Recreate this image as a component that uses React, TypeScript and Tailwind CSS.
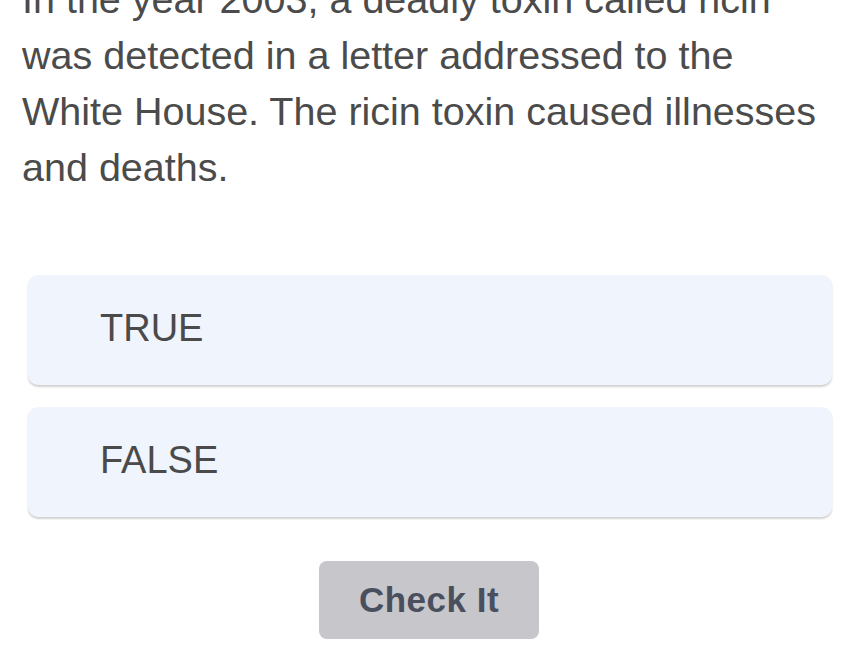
import React, { useState } from 'react';

const options = ['TRUE', 'FALSE'];

const questionLines = [
  'In the year 2003, a deadly toxin called ricin',
  'was detected in a letter addressed to the',
  'White House. The ricin toxin caused illnesses',
  'and deaths.',
];

export default function App() {
  const [selected, setSelected] = useState<string | null>(null);

  return (
    <div className="min-h-[669px] bg-white overflow-hidden font-['Liberation_Sans',Arial,sans-serif]">
      {/* Question text */}
      <p className="-mt-[29px] pl-[22px] text-[39.5px] leading-[56px] text-[#4b4b4b] whitespace-nowrap">
        {questionLines.map((line) => (
          <span key={line} className="block">
            {line}
          </span>
        ))}
      </p>

      {/* Answer options */}
      <div className="mt-[80px] flex flex-col gap-[22px] pl-[28px] pr-[27px]">
        {options.map((opt) => (
          <button
            key={opt}
            onClick={() => setSelected(opt)}
            className={`h-[110px] rounded-[10px] bg-[#f0f4fd] pl-[72px] pb-[3px] text-left text-[38px] text-[#4a4a4a] shadow-[0_2px_2px_rgba(0,0,0,0.18)] ${
              selected === opt ? 'ring-2 ring-[#9bb3e8]' : ''
            }`}
          >
            {opt}
          </button>
        ))}
      </div>

      {/* Submit */}
      <div className="mt-[44px] flex justify-center pr-[1px]">
        <button className="h-[78px] w-[220px] rounded-[8px] bg-[#c6c6cb] text-[35px] font-bold tracking-[0.5px] text-[#4a4f5e]">
          Check It
        </button>
      </div>
    </div>
  );
}
